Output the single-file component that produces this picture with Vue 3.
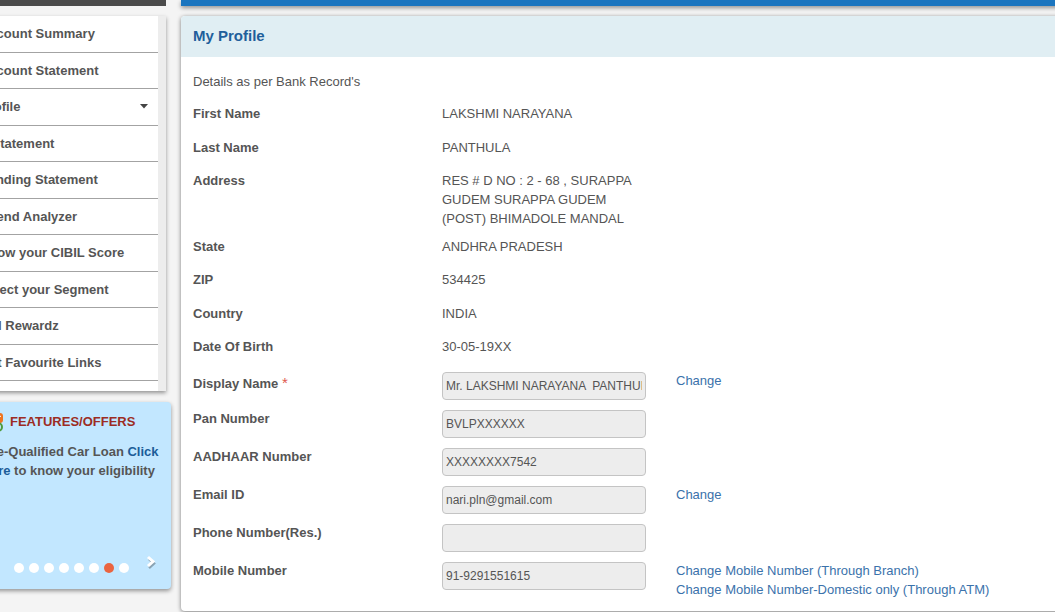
<script setup>
const menu = [
  { text: 'Account Summary' },
  { text: 'Account Statement' },
  { text: 'Profile', open: true },
  { text: 'e-Statement' },
  { text: 'Pending Statement' },
  { text: 'Spend Analyzer' },
  { text: 'Know your CIBIL Score' },
  { text: 'Select your Segment' },
  { text: 'SBI Rewardz' },
  { text: 'Get Favourite Links' }
]

const slides = [1, 2, 3, 4, 5, 6, 7, 8]
const activeSlide = 7

const details = [
  { label: 'First Name', value: 'LAKSHMI NARAYANA' },
  { label: 'Last Name', value: 'PANTHULA' },
  { label: 'Address', value: 'RES # D NO : 2 - 68 , SURAPPA GUDEM SURAPPA GUDEM (POST) BHIMADOLE MANDAL' },
  { label: 'State', value: 'ANDHRA PRADESH' },
  { label: 'ZIP', value: '534425' },
  { label: 'Country', value: 'INDIA' },
  { label: 'Date Of Birth', value: '30-05-19XX' }
]

const fields = [
  { id: 'display', label: 'Display Name', value: 'Mr. LAKSHMI NARAYANA  PANTHULA', required: true, links: ['Change'] },
  { id: 'pan', label: 'Pan Number', value: 'BVLPXXXXXX', links: [] },
  { id: 'aadhaar', label: 'AADHAAR Number', value: 'XXXXXXXX7542', links: [] },
  { id: 'email', label: 'Email ID', value: 'nari.pln@gmail.com', links: ['Change'] },
  { id: 'phone', label: 'Phone Number(Res.)', value: '', links: [] },
  {
    id: 'mobile',
    label: 'Mobile Number',
    value: '91-9291551615',
    links: ['Change Mobile Number (Through Branch)', 'Change Mobile Number-Domestic only (Through ATM)']
  }
]
</script>

<template>
  <div class="page">
    <aside class="side">
      <div class="bar bar-dark"></div>
      <nav class="menu">
        <ul>
          <li v-for="item in menu" :key="item.text">
            <a href="#">{{ item.text }}</a>
            <svg v-if="item.open" width="8" height="5" viewBox="0 0 8 5"><path d="M0 0h8L4 4.500z" fill="#444" /></svg>
          </li>
        </ul>
      </nav>
      <section class="promo">
        <h2>
          <svg width="28" height="20" viewBox="0 0 28 20">
            <rect x="6" y="0" width="8" height="9" rx="2" fill="#1d74bd" />
            <rect x="15" y="1" width="12" height="10" rx="3" fill="#ee7420" />
            <rect x="6" y="11" width="8" height="8" rx="2" fill="#e5b52b" />
            <circle cx="22" cy="15" r="4" fill="none" stroke="#4f9b3c" stroke-width="2" />
            <path d="M22 6l3-2" stroke="#fff" />
          </svg>
          FEATURES/OFFERS
        </h2>
        <p>Pre-Qualified Car Loan <a href="#">Click here</a> to know your eligibility</p>
        <div class="pager">
          <button
            v-for="n in slides"
            :key="n"
            type="button"
            class="dot"
            :class="{ active: n === activeSlide }"
            :aria-label="'Offer ' + n"
          ></button>
          <button type="button" class="next" aria-label="Next offer">
            <svg width="12" height="14" viewBox="0 0 12 14">
              <path d="M3 3l5 4.500-5 4.500" fill="none" stroke="#8aa3b3" stroke-width="2.500" transform="translate(1 1)" />
              <path d="M3 2l5 4.500-5 4.500" fill="none" stroke="#fff" stroke-width="3" />
            </svg>
          </button>
        </div>
      </section>
    </aside>

    <main class="main">
      <div class="bar bar-blue"></div>
      <section class="panel">
        <h1>My Profile</h1>
        <div class="body">
          <p class="intro">Details as per Bank Record's</p>
          <dl>
            <div v-for="d in details" :key="d.label" class="row detail">
              <dt>{{ d.label }}</dt>
              <dd>{{ d.value }}</dd>
            </div>
          </dl>
          <form>
            <div v-for="f in fields" :key="f.id" class="row field">
              <label :for="f.id" :class="{ required: f.required }">{{ f.label }} <span v-if="f.required">*</span></label>
              <input :id="f.id" type="text" readonly :value="f.value" />
              <div class="links">
                <a v-for="l in f.links" :key="l" href="#">{{ l }}</a>
              </div>
            </div>
          </form>
        </div>
      </section>
    </main>
  </div>
</template>

<style>
body {
  background: #f4f4f4;
  overflow: hidden;
}
</style>

<style scoped>
.page {
  display: flex;
  gap: 10px;
  overflow: hidden;
  color: #555;
  font-family: "Liberation Sans", Arial, sans-serif;
  font-size: 13px;
  line-height: 19px;
}
.side {
  flex: none;
  width: 207px;
  margin-left: -36px;
}
.main {
  flex: 1;
  min-width: 0;
  margin-right: -8px;
  padding-bottom: 4px;
}
.bar {
  height: 6px;
  margin-bottom: 10px;
}
.bar-dark {
  margin-right: 5px;
  background: #4b4b4b;
}
.bar-blue {
  background: #1b75bf;
  box-shadow: 0 2px 4px rgba(0, 0, 0, 0.4);
}
.menu {
  margin-right: 5px;
  padding-right: 8px;
  background: #ededed;
  box-shadow: 0 2px 4px rgba(0, 0, 0, 0.4);
}
ul {
  display: grid;
  grid-auto-rows: 37px 36px;
  margin: 0;
  padding: 0 0 10px;
  background: #fff;
  list-style: none;
}
li {
  display: flex;
  align-items: center;
  justify-content: space-between;
  padding: 0 10px 1px 16px;
  border-bottom: 1px solid #a3a3a3;
}
.menu a {
  color: #555;
  font-weight: bold;
  text-decoration: none;
}
.promo {
  display: flex;
  flex-direction: column;
  box-sizing: border-box;
  min-height: 187px;
  margin-top: 11px;
  padding: 10px 8px 8px 12px;
  border-radius: 4px;
  background: #c2e7ff;
  box-shadow: 0 2px 4px rgba(0, 0, 0, 0.4);
}
h2 {
  display: flex;
  align-items: center;
  gap: 6px;
  margin: 0 0 10px;
  color: #9c2c23;
  font-size: 13px;
  line-height: 20px;
}
.promo p {
  margin: 0 0 0 7px;
  font-weight: bold;
}
.promo p a {
  color: #1b5c98;
  text-decoration: none;
}
.pager {
  display: flex;
  align-items: center;
  justify-content: flex-end;
  gap: 5px;
  margin-top: auto;
}
.pager button {
  padding: 0;
  border: 0;
}
.dot {
  width: 10px;
  height: 10px;
  border-radius: 50%;
  background: #fff;
}
.dot.active {
  background: #ea6440;
}
.pager .next {
  height: 14px;
  margin: 0 6px 12px 11px;
  background: none;
}
.next svg {
  display: block;
}
.panel {
  border-radius: 4px;
  background: #fff;
  box-shadow: 0 1px 4px rgba(0, 0, 0, 0.5);
}
h1 {
  margin: 0;
  padding: 9px 12px 11px;
  border-radius: 4px 4px 0 0;
  background: #e0eef3;
  color: #1f5f9b;
  font-size: 15px;
  line-height: 21px;
}
.body {
  padding: 15px 12px 12px;
}
.intro {
  margin: 0 0 13px;
}
dl,
dd {
  margin: 0;
}
.row {
  display: grid;
  grid-template-columns: 249px 204px 1fr;
}
.detail {
  padding-bottom: 14px;
}
.detail:nth-child(4n + 1) {
  padding-bottom: 15px;
}
.detail:nth-child(3) {
  padding-bottom: 9px;
}
dt,
label {
  font-weight: bold;
}
form {
  margin-top: 1px;
}
.field {
  min-height: 38px;
}
.required {
  padding-top: 3px;
}
.required span {
  color: #e0584c;
  font-size: 15px;
  font-weight: normal;
  line-height: 1;
}
input {
  box-sizing: border-box;
  width: 100%;
  height: 28px;
  margin-top: 1px;
  padding: 0 3px;
  border: 1px solid #c4c4c4;
  border-radius: 4px;
  background: #ededed;
  color: #555;
  font: 12px "Liberation Sans", Arial, sans-serif;
  outline: none;
}
.links {
  display: flex;
  flex-direction: column;
  align-items: flex-start;
  padding-left: 30px;
}
.links a {
  color: #3b72ab;
  text-decoration: none;
}
</style>
